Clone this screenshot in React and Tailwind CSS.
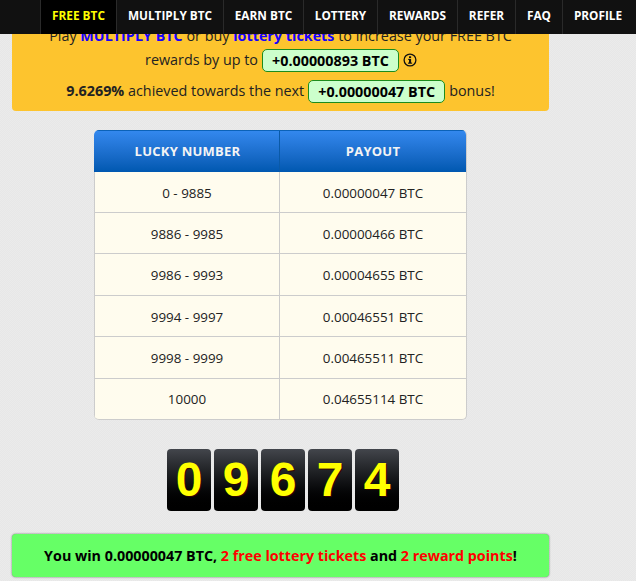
const navItems = [
  { label: "FREE BTC", width: "w-[76px]", active: true },
  { label: "MULTIPLY BTC", width: "w-[107px]" },
  { label: "EARN BTC", width: "w-[80px]" },
  { label: "LOTTERY", width: "w-[74px]" },
  { label: "REWARDS", width: "w-[80px]" },
  { label: "REFER", width: "w-[58px]" },
  { label: "FAQ", width: "w-[47px]" },
  { label: "PROFILE", width: "w-[71px]" },
];

const payouts = [
  { range: "0 - 9885", amount: "0.00000047 BTC", height: "h-[41px] pt-[2px]" },
  { range: "9886 - 9985", amount: "0.00000466 BTC", height: "h-[41px] pt-[2px]" },
  { range: "9986 - 9993", amount: "0.00004655 BTC", height: "h-[42px] pt-[1px]" },
  { range: "9994 - 9997", amount: "0.00046551 BTC", height: "h-[41px] pt-[2px]" },
  { range: "9998 - 9999", amount: "0.00465511 BTC", height: "h-[42px] pt-[1px]" },
  { range: "10000", amount: "0.04655114 BTC", height: "h-[40px] pt-[1px]" },
];

const digits = ["0", "9", "6", "7", "4"];

function Amount({ children }) {
  return (
    <span className="inline-block h-[23px] rounded-[5px] border border-[#1c8c1c] bg-[#ccffcc] px-[9px] font-bold leading-[21px] text-black">
      {children}
    </span>
  );
}

export default function App() {
  return (
    <div className="relative h-[581px] w-[636px] overflow-hidden bg-[repeating-conic-gradient(#e7e7e7_0_25%,#ebebeb_0_50%)] bg-[length:2px_2px] font-['Open_Sans',sans-serif]">
      {/* top nav sits over the scrolled page */}
      <nav className="absolute left-0 top-0 z-10 flex h-[34px] w-full bg-[#111111] pl-[40px]">
        {navItems.map((item) => (
          <div
            key={item.label}
            className={`flex h-full ${item.width} items-center justify-center border-l border-[#2a2a2a] pb-[2px] text-[11.8px] font-bold ${
              item.active ? "bg-black text-[#ffff00]" : "text-white"
            }`}
          >
            {item.label}
          </div>
        ))}
      </nav>

      <main className="ml-[12px] w-[537px]">
        <div className="flex h-[111px] flex-col items-center justify-end rounded-b-[4px] bg-[#fdc42e] pb-[8px] text-[14.35px] text-[#222222]">
          <p className="leading-[24px]">
            Play <b className="text-[#1500ff]">MULTIPLY BTC</b> or buy{" "}
            <b className="text-[#1500ff]">lottery tickets</b> to increase your FREE BTC
          </p>
          <p className="flex h-[24px] items-center gap-[4px] pl-[1px]">
            rewards by up to <Amount>+0.00000893 BTC</Amount>
            <svg viewBox="0 0 14 14" className="h-[14px] w-[14px]">
              <circle cx="7" cy="7" r="5.9" fill="none" stroke="#111" strokeWidth="1.3" />
              <rect x="6" y="5.9" width="2.1" height="4.2" fill="#111" />
              <rect x="6" y="3.3" width="2.1" height="1.7" fill="#111" />
              <rect x="5" y="9.6" width="4.1" height="1.1" fill="#111" />
              <rect x="5" y="5.9" width="1.5" height="0.9" fill="#111" />
            </svg>
          </p>
          <p className="mt-[7px] flex h-[24px] items-center gap-[4px]">
            <span>
              <b>9.6269%</b> achieved towards the next
            </span>
            <Amount>+0.00000047 BTC</Amount>
            <span>bonus!</span>
          </p>
        </div>

        <div className="ml-[82px] mt-[19px] w-[373px] overflow-hidden rounded-[5px] border-b border-r border-[#cccccc] bg-[#fffcee] text-[13.4px] text-[#222222]">
          <div className="grid h-[42px] grid-cols-[186px_1fr] border-t border-[#0b62b8] bg-gradient-to-b from-[#3388ee] to-[#0058b0] text-[13px] font-bold tracking-[0.25px] text-[#f4f4f4]">
            <div className="flex items-center justify-center border-r border-[#0a5aa8] pl-[2px]">LUCKY NUMBER</div>
            <div className="flex items-center justify-center">PAYOUT</div>
          </div>
          {payouts.map((row) => (
            <div
              key={row.range}
              className={`grid ${row.height} grid-cols-[186px_1fr] border-b border-[#cccccc] last:border-b-0`}
            >
              <div className="-mt-[2px] flex items-center justify-center border-x border-[#cccccc]">
                <span className="pt-[2px]">{row.range}</span>
              </div>
              <div className="flex items-center justify-center">{row.amount}</div>
            </div>
          ))}
        </div>

        <div className="ml-[155px] mt-[29px] flex gap-[3px]">
          {digits.map((digit, i) => (
            <div
              key={i}
              className="flex h-[62px] w-[44px] items-center justify-center rounded-[4px] bg-gradient-to-b from-[#43464c] to-black font-['Liberation_Sans',sans-serif] text-[48px] font-bold text-[#ffff00] [text-shadow:1px_1px_0_#330000]"
            >
              {digit}
            </div>
          ))}
        </div>

        <div className="mt-[23px] flex h-[43px] items-center justify-center rounded-[4px] bg-[#66ff66] text-[14.3px] font-bold text-black shadow-[0_0_2px_rgba(0,0,0,0.6)]">
          <p>
            You win 0.00000047 BTC, <span className="text-[#ff0000]">2 free lottery tickets</span> and{" "}
            <span className="text-[#ff0000]">2 reward points</span>!
          </p>
        </div>
      </main>
    </div>
  );
}
